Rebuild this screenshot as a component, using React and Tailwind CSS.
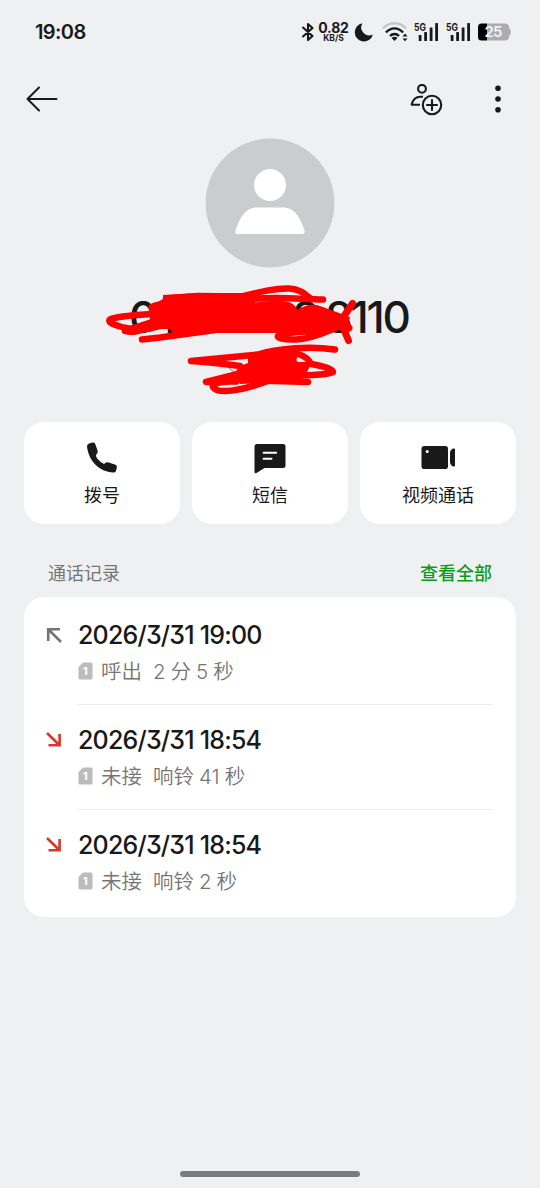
import React from 'react';

const calls = [
  { id: 1, type: 'out', time: '2026/3/31 19:00', status: '呼出', detail: ['2', '分', '5', '秒'] },
  { id: 2, type: 'missed', time: '2026/3/31 18:54', status: '未接', detail: ['响铃', '41', '秒'] },
  { id: 3, type: 'missed', time: '2026/3/31 18:54', status: '未接', detail: ['响铃', '2', '秒'] },
];

const Signal = () => (
  <svg width="25" height="20" viewBox="0 0 25 20" fill="#191919" className="shrink-0 overflow-visible">
    <text x="0" y="8.6" fontSize="10.5" fontWeight="700" textLength="12" lengthAdjust="spacingAndGlyphs">5G</text>
    <rect x="4.7" y="13" width="2.8" height="6" rx="0.6" />
    <rect x="10.2" y="10" width="2.8" height="9" rx="0.6" />
    <rect x="15.7" y="5.5" width="2.8" height="13.5" rx="0.6" />
    <rect x="21.2" y="1" width="2.8" height="18" rx="0.6" />
  </svg>
);

function StatusBar() {
  return (
    <div className="flex h-16 items-center pl-[35px] pr-7">
      <span className="flex-1 text-[20px] font-semibold leading-none tracking-[-0.6px]">19:08</span>
      <svg width="14" height="20" viewBox="0 0 14 20" fill="none" stroke="#191919" strokeWidth="2.1" strokeLinejoin="round" strokeLinecap="round">
        <path d="M2 5.5 11.5 14 7 18V2l4.5 4L2 14.5" />
      </svg>
      <div className="ml-[4px] flex w-[29px] flex-col items-center">
        <span className="text-[14px] font-bold leading-[12px] tracking-[-0.2px]">0.82</span>
        <span className="text-[8.5px] font-bold leading-[8px]">KB/S</span>
      </div>
      <svg width="20" height="20" viewBox="0 0 20 20" className="ml-[6px] shrink-0">
        <path d="M8.5 1.2A9.2 9.2 0 1 0 18.9 12.4 7.9 7.9 0 0 1 8.5 1.2Z" fill="#191919" />
      </svg>
      <svg width="26" height="20" viewBox="0 0 26 20" fill="none" className="ml-[8px] shrink-0">
        <path d="M1 6.5C7-.5 18-.5 24 6.5" stroke="#c6c7c9" strokeWidth="2.3" />
        <path d="M4 10.5C9 5 16 5 21 10.5" stroke="#191919" strokeWidth="2.4" />
        <path d="M8 14C10.5 11.3 14.5 11.3 17 14" stroke="#191919" strokeWidth="2.4" />
        <path d="M9.5 16Q12.5 13.5 15.5 16L12.5 19Z" fill="#191919" />
        <path d="M20.5 14.5 23 11.5 25.5 14.5ZM20.5 16.5 23 19.3 25.5 16.5Z" fill="#191919" />
      </svg>
      <div className="ml-[6px] flex gap-[6.5px]">
        <Signal />
        <Signal />
      </div>
      <svg width="34" height="18" viewBox="0 0 34 18" className="ml-[7.5px] shrink-0">
        <path d="M9 .5H27Q31 .5 31 4.5V13.5Q31 17.5 27 17.5H9Z" fill="#acacae" />
        <path d="M31 5Q33 7 33 9T31 13Z" fill="#acacae" />
        <path d="M3.5.5H9V17.5H3.5Q0 17.5 0 14V4Q0 .5 3.5.5Z" fill="#000" />
        <text x="6.5" y="14.3" fontSize="15" fontWeight="600" fill="#f4f4f4" textLength="18">25</text>
      </svg>
    </div>
  );
}

function Header() {
  return (
    <div className="flex h-[74px] items-center pl-6 pr-[36px]">
      <svg width="36" height="32" viewBox="0 0 36 32" fill="none" stroke="#191919" strokeWidth="2" strokeLinecap="round" strokeLinejoin="round">
        <path d="M32.5 14H4M15 2.5 3.5 14 15 25.5" />
      </svg>
      <div className="flex-1" />
      <svg width="34" height="34" viewBox="0 0 34 34" fill="none" stroke="#191919" strokeWidth="2.1" strokeLinecap="round" strokeLinejoin="round">
        <circle cx="12" cy="4.8" r="3.9" />
        <path d="M13 12.7H10.5C5.5 12.7 2.8 15.5 1.7 20.7H10" strokeLinecap="butt" />
        <circle cx="22" cy="21" r="9.2" />
        <path d="M22 16V26M17 21H27" />
      </svg>
      <svg width="12" height="32" viewBox="0 0 12 32" fill="#191919" className="ml-[48px]">
        <circle cx="6" cy="3.3" r="2.8" />
        <circle cx="6" cy="14" r="2.8" />
        <circle cx="6" cy="24.7" r="2.8" />
      </svg>
    </div>
  );
}

function Avatar() {
  return (
    <svg width="130" height="130" viewBox="0 0 130 130" className="mx-auto block">
      <circle cx="65" cy="65" r="64.4" fill="#cbccce" />
      <circle cx="65" cy="47" r="16" fill="#fff" />
      <path d="M53 69.5H77C88 69.5 94 76 99.5 92.5Q100.3 96 97.5 96H32.5Q29.7 96 30.5 92.5C36 76 42 69.5 53 69.5Z" fill="#fff" />
    </svg>
  );
}

// Phone number with the private part scribbled out
function HiddenNumber() {
  return (
    <div className="relative h-[154px]">
      <div className="flex h-[97px] items-center pl-[129px] text-[44px] font-medium leading-none">
        <span className="w-[29px]">0</span>
        <span className="w-[134px]">1</span>
        <span className="w-[33px]">8</span>
        <span className="tracking-[-2.2px]">8110</span>
      </div>
      <svg width="540" height="154" viewBox="0 268 540 154" className="absolute left-0 top-0" fill="none" stroke="#f00" strokeWidth="6.5" strokeLinecap="round" strokeLinejoin="round">
        <path d="M229 368 234 372" stroke="#777" strokeWidth="1" />
        <path d="M166 298.5 198 296 242 296.5C260 292 275 288 289 288.5 300 289 305 294 311 299" />
        <path d="M250 299.5C275 296 302 299.5 323 299.5" />
        <path d="M152 307C155 305 160 304 170 303" />
        <path d="M160 313.500C140 315 119 315.500 110 319.500 106 323 120 327 131 329L158 320" />
        <path d="M125 331C137 334.500 148 326 160 326" />
        <path d="M142 339.500 160 337.500 215 330" />
        <path d="M149 307 163 299V295L198 293H242L255 298V302.500Q280 299 290 302.500 297 306 297 310 310 302 320 306L350 317 348 326 330 330 310 333H213L175 337 170 329H160L150 332 123 332 122 328 151 320Z" fill="#f00" stroke="none" />
        <path d="M335 327C322 332 290 331 279 335 274 338 285 340 296 339.500 312 339 328 331 338 327" />
        <path d="M352.500 303.500 342 319 342 325 348.500 340.500M349 328 342 319" strokeWidth="7" />
        <path d="M335 349.500C310 346 280 348 258 354.500L191 361 C210 362 225 364 240 366" />
        <path d="M248 363V357C260 348 285 346 297 350L298 356Q295 361 298 362H312L308 370Q306 377 298 379L306 383H262L240 384 233 375 240 366Z" fill="#f00" stroke="none" />
        <path d="M242 373 206 382C220 382 235 379 250 380" />
        <path d="M236 381.500C224 381 211 383 213 387 218 395 243 390 268 381" />
        <path d="M258 380.500 308 382" />
        <path d="M298 354Q308 357 311 364C323 366 333 369 333 372 327 376 310 374 296 376" />
      </svg>
    </div>
  );
}

const PhoneIcon = () => (
  <svg width="34" height="34" viewBox="0 0 34 34" fill="#191919">
    <path d="M4 2.5 7.5 1.6Q9.5 1.2 10.2 3L12.7 10Q13.2 11.5 11.3 13.6 10.3 15 12 17.2 15 21 19 23 20.2 21.7 21.5 21.3 22.6 21 23.8 21.5L30.5 23.8Q32.2 24.5 31.9 26.2L30.9 30Q30.3 31.7 28.4 31.5C14 31 3.5 19.5 2 5.5Q1.9 3.3 4 2.5Z" />
  </svg>
);

const MessageIcon = () => (
  <svg width="34" height="34" viewBox="0 0 34 34">
    <path d="M4 3H30Q32.5 3 32.5 5.5V24.5Q32.5 27 30 27H11.5L3.5 32Q1.5 33 1.5 31V5.5Q1.5 3 4 3Z" fill="#191919" />
    <path d="M10.5 11.8H23.2M10.5 17.7H18.5" stroke="#fff" strokeWidth="1.9" strokeLinecap="round" />
  </svg>
);

const VideoIcon = () => (
  <svg width="36" height="34" viewBox="0 0 36 34" fill="#191919">
    <rect x="1.5" y="5" width="26.5" height="23" rx="2.8" />
    <path d="M34.5 8V25H32.5Q30.5 23.5 30.5 21V12Q30.5 9.5 32.5 8Z" stroke="#191919" strokeWidth="1" strokeLinejoin="round" />
    <circle cx="7.2" cy="10.5" r="1.5" fill="#fff" />
  </svg>
);

const actions = [
  { label: '拨号', Icon: PhoneIcon },
  { label: '短信', Icon: MessageIcon },
  { label: '视频通话', Icon: VideoIcon },
];

function CallArrow({ type }) {
  if (type === 'out') {
    return (
      <svg width="18" height="18" viewBox="0 0 18 18" fill="none" stroke="#757575" strokeWidth="2.6">
        <path d="M15 3.2H3.2V15M3.5 3.5 16 16" />
      </svg>
    );
  }
  return (
    <svg width="18" height="18" viewBox="0 0 18 18" fill="none" stroke="#d9372a" strokeWidth="2.6">
      <path d="M3.5 14.3H14.6V3M14.5 14.3 2 2" />
    </svg>
  );
}

const SimBadge = () => (
  <svg width="15" height="18" viewBox="0 0 15 18" className="mb-[2px] mr-[8px] shrink-0">
    <path d="M5 .5H13Q14.5.5 14.5 2V16Q14.5 17.5 13 17.5H2Q.5 17.5.5 16V5Z" fill="#bcbcbc" />
    <text x="7.2" y="13" textAnchor="middle" fontSize="10.5" fontWeight="800" fill="#fff">1</text>
  </svg>
);

export default function App() {
  return (
    <div className="flex h-[1188px] w-[540px] flex-col overflow-hidden bg-[#eff0f2] font-['Inter','Noto_Sans_CJK_SC',sans-serif] text-[#191919]">
      <StatusBar />
      <Header />
      <Avatar />
      <HiddenNumber />

      <div className="-mt-[0.5px] grid grid-cols-3 gap-3 px-6">
        {actions.map(({ label, Icon }) => (
          <button key={label} className="flex h-[102px] flex-col items-center rounded-[20px] bg-white pt-[19px]">
            <Icon />
            <span className="mt-[9px] text-[18px] leading-[24px]">{label}</span>
          </button>
        ))}
      </div>

      <div className="mt-[37px] flex justify-between px-12 text-[18px] leading-[26px]">
        <span className="text-[#757575]">通话记录</span>
        <span className="font-medium text-[#0c9c1b]">查看全部</span>
      </div>

      <div className="mx-6 mt-[10.5px] h-[320px] rounded-[20px] bg-white px-6 pt-[3px]">
        {calls.map((call, i) => (
          <div key={call.id} className="flex h-[105px]">
            <div className="-ml-[3px] w-[33px] pt-[26px]">
              <CallArrow type={call.type} />
            </div>
            <div className={i < calls.length - 1 ? 'flex-1 border-b border-[#ebebeb] pt-[19px]' : 'flex-1 pt-[19px]'}>
              <div className="text-[25px] font-medium leading-[32px] tracking-[-0.8px] [font-feature-settings:'cv09']">{call.time}</div>
              <div className="mt-[7px] flex h-[28px] items-center text-[20.5px] font-[350] text-[#757575]">
                <SimBadge />
                <span className="mr-[11px]">{call.status}</span>
                <span className="flex gap-[5px]">
                  {call.detail.map((part, n) => (
                    <span key={n}>{part}</span>
                  ))}
                </span>
              </div>
            </div>
          </div>
        ))}
      </div>

      <div className="mx-auto mb-[11px] mt-auto h-[6px] w-[180px] rounded-full bg-[#7a7b7d]" />
    </div>
  );
}
